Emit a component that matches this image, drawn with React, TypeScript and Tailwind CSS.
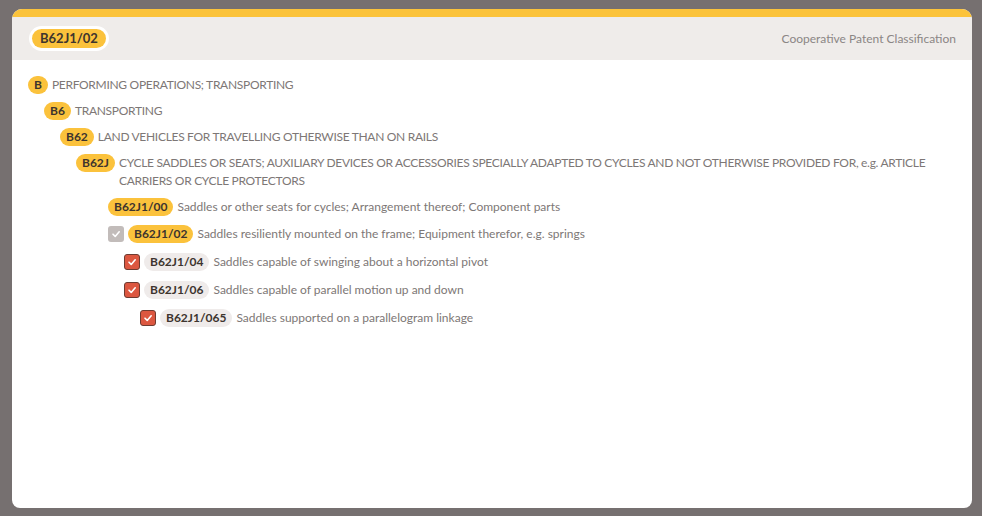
import React from "react";

type Node = {
  code: string;
  title: string;
  indent: number;
  check?: "gray" | "red";
  tone?: "yellow" | "gray";
  caps?: boolean;
};

const nodes: Node[] = [
  { code: "B", title: "PERFORMING OPERATIONS; TRANSPORTING", indent: 0, caps: true },
  { code: "B6", title: "TRANSPORTING", indent: 1, caps: true },
  { code: "B62", title: "LAND VEHICLES FOR TRAVELLING OTHERWISE THAN ON RAILS", indent: 2, caps: true },
  {
    code: "B62J",
    title:
      "CYCLE SADDLES OR SEATS; AUXILIARY DEVICES OR ACCESSORIES SPECIALLY ADAPTED TO CYCLES AND NOT OTHERWISE PROVIDED FOR, e.g. ARTICLE CARRIERS OR CYCLE PROTECTORS",
    indent: 3,
    caps: true,
  },
  { code: "B62J1/00", title: "Saddles or other seats for cycles; Arrangement thereof; Component parts", indent: 5 },
  { code: "B62J1/02", title: "Saddles resiliently mounted on the frame; Equipment therefor, e.g. springs", indent: 5, check: "gray" },
  { code: "B62J1/04", title: "Saddles capable of swinging about a horizontal pivot", indent: 6, check: "red", tone: "gray" },
  { code: "B62J1/06", title: "Saddles capable of parallel motion up and down", indent: 6, check: "red", tone: "gray" },
  { code: "B62J1/065", title: "Saddles supported on a parallelogram linkage", indent: 7, check: "red", tone: "gray" },
];

const indents = ["pl-0", "pl-4", "pl-8", "pl-12", "pl-16", "pl-20", "pl-24", "pl-28"];

const Check = ({ kind }: { kind: "gray" | "red" }) => (
  <span
    className={
      kind === "red"
        ? "flex h-4 w-4 shrink-0 items-center justify-center rounded-[3px] border border-[#6e3b31] bg-[#dc5740]"
        : "flex h-4 w-4 shrink-0 items-center justify-center rounded-[3px] bg-[#c2bcba]"
    }
  >
    <svg width="10" height="10" viewBox="0 0 10 10" fill="none">
      <path d="M2 5.2 L4.2 7.4 L8.2 2.8" stroke="white" strokeWidth="1.6" strokeLinecap="round" strokeLinejoin="round" />
    </svg>
  </span>
);

const Pill = ({ code, tone }: { code: string; tone?: "yellow" | "gray" }) => (
  <span
    className={
      (tone === "gray" ? "bg-[#efebea] " : "bg-[#fbc23c] ") +
      "inline-flex h-[18px] shrink-0 items-center rounded-full px-[6px] text-[12px] font-bold leading-none text-[#3d342e]"
    }
  >
    {code}
  </span>
);

export default function App() {
  return (
    <div className="h-[516px] w-[982px] overflow-hidden bg-[#767070] pt-[9px] pl-3 font-['Lato',sans-serif]">
      <div className="flex h-[499px] w-[960px] flex-col overflow-hidden rounded-t-[10px] rounded-b-[8px] bg-white">
        <div className="h-2 bg-[#fbc33b]" />
        <div className="flex h-[43px] items-center justify-between bg-[#efecea] pl-[17px] pr-4">
          <span className="rounded-full bg-white p-[3px]">
            <span className="flex h-[19px] items-center rounded-full bg-[#fbc23c] px-[8px] text-[13px] font-bold text-[#3d342e]">
              B62J1/02
            </span>
          </span>
          <span className="text-[12px] text-[#8b8685]">Cooperative Patent Classification</span>
        </div>
        <div className="flex flex-col pl-4 pr-4 pt-[12px] text-[12px] text-[#7d7776]">
          {nodes.map((n) => (
            <div
              key={n.code}
              className={
                indents[n.indent] +
                (n.check ? " flex items-start gap-[4px] py-[5px]" : " flex items-start gap-[4px] py-[4px]")
              }
            >
              {n.check && (
                <span className="flex h-[18px] items-center">
                  <Check kind={n.check} />
                </span>
              )}
              <Pill code={n.code} tone={n.tone} />
              <span className={n.caps ? "leading-[18px] tracking-[-0.3px]" : "leading-[18px]"}>{n.title}</span>
            </div>
          ))}
        </div>
      </div>
    </div>
  );
}
